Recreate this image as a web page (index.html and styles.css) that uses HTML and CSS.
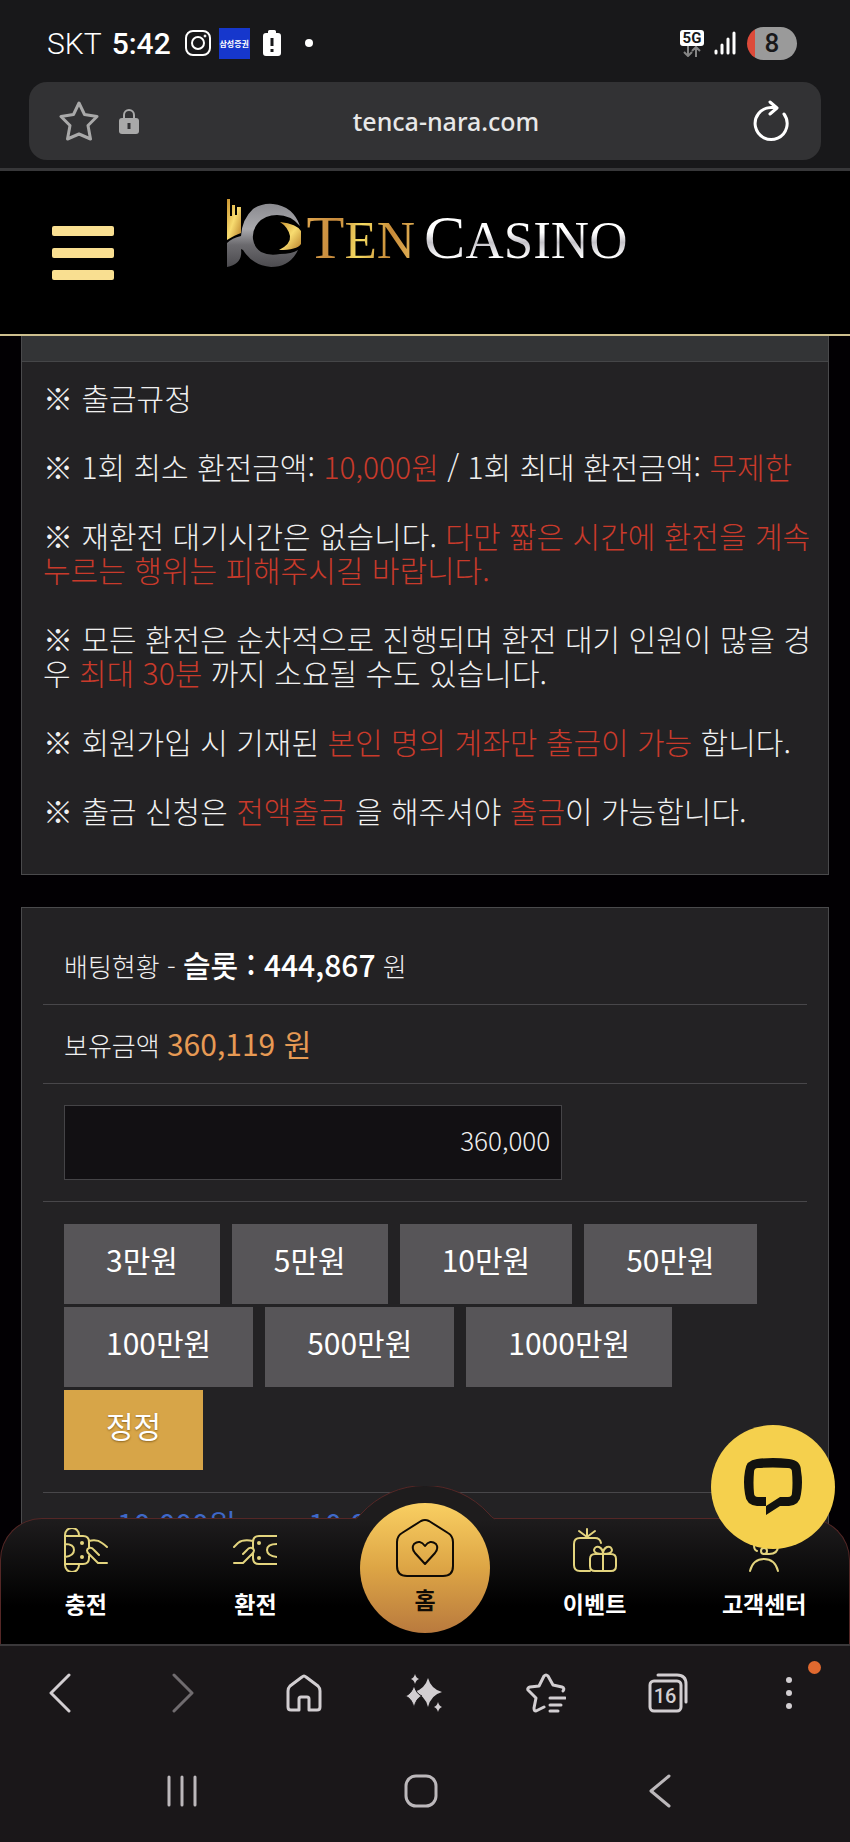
FILE: index.html
```html
<!DOCTYPE html>
<html lang="ko">
<head>
  <meta charset="UTF-8">
  <meta name="viewport" content="width=device-width, initial-scale=1.0">
  <title>TEN CASINO</title>
  <link rel="stylesheet" href="styles.css">
</head>
<body>
  <div class="status-bar">
    <span class="carrier">SKT</span>
    <span class="clock">5:42</span>
    <svg class="insta" width="26" height="26" viewBox="0 0 26 26" fill="none" stroke="#fff" stroke-width="2">
      <rect x="1" y="1" width="24" height="24" rx="7"/>
      <circle cx="13" cy="13" r="6"/>
      <circle cx="20" cy="6" r="1" fill="#fff" stroke-width="1"/>
    </svg>
    <span class="app-badge">삼성증권</span>
    <svg class="low" width="18" height="26" viewBox="0 0 18 26">
      <path d="M5 3V1.500Q5 0 6.500 0h5Q13 0 13 1.500V3h2q3 0 3 3v17q0 3-3 3H3q-3 0-3-3V6q0-3 3-3z" fill="#fff"/>
      <path d="M9 8v8M9 19v3" stroke="#18181a" stroke-width="3"/>
    </svg>
    <span class="more-dot"></span>
    <div class="network">
      <span class="net-type">5G</span>
      <svg width="18" height="11" viewBox="0 0 18 11" fill="none" stroke="#858585" stroke-width="2">
        <path d="M5 0v10M1 6l4 4 4-4M13 11V1M9 5l4-4 4 4"/>
      </svg>
    </div>
    <svg class="signal" width="22" height="24" viewBox="0 0 22 24" stroke="#fff" stroke-width="3" stroke-linecap="round">
      <path d="M2 20v2M8 14v8M14 8v14"/>
      <path d="M20 2v20"/>
    </svg>
    <span class="battery">8</span>
  </div>

  <div class="url-wrap">
    <div class="url-bar">
      <button class="icon-btn" aria-label="Bookmark">
        <svg width="40" height="40" viewBox="0 0 40 40" fill="none" stroke="#a9a9a9" stroke-width="3" stroke-linejoin="round">
          <path d="M20 2l5.500 11.500L38 15.500l-9 9L31.500 38 20 33 8.500 38 11 24.500l-9-9 12.500-2z"/>
        </svg>
      </button>
      <svg class="lock" width="20" height="26" viewBox="0 0 20 26">
        <path d="M5 12V7a5 5 0 0 1 10 0v5" fill="none" stroke="#a9a9a9" stroke-width="2"/>
        <rect x="0" y="10" width="20" height="16" rx="3" fill="#a9a9a9"/>
        <path d="M10 15v6" stroke="#323234" stroke-width="3"/>
      </svg>
      <span class="url">tenca-nara.com</span>
      <button class="icon-btn" aria-label="Reload">
        <svg width="36" height="42" viewBox="0 0 36 42" fill="none" stroke="#fff" stroke-width="3" stroke-linecap="round" stroke-linejoin="round">
          <path d="M31 14a16 16 0 1 1-13-6.500h5M17 2l7 6-7 6"/>
        </svg>
      </button>
    </div>
  </div>

  <div class="site">
    <header class="site-header">
      <button class="menu" aria-label="Menu"><i></i><i></i><i></i></button>
      <a class="logo" href="#">
        <svg width="76" height="68" viewBox="0 0 76 68">
          <defs>
            <linearGradient id="silver" x1="0" y1="0" x2="0" y2="1">
              <stop offset="0" stop-color="#8b8b90"/>
              <stop offset=".4" stop-color="#a9a9ad"/>
              <stop offset=".65" stop-color="#6b6a6e"/>
              <stop offset="1" stop-color="#4c4b4f"/>
            </linearGradient>
            <linearGradient id="gold" x1="0" y1="0" x2="1" y2="1">
              <stop offset="0" stop-color="#c9922e"/>
              <stop offset=".5" stop-color="#f8dc70"/>
              <stop offset="1" stop-color="#b9812b"/>
            </linearGradient>
          </defs>
          <path d="M0 0h3v17h2V6h3v10h2V8h4v26q-6 2-14 7z" fill="url(#gold)"/>
          <path fill-rule="evenodd" d="M0 68V44q5-5 14-7Q15 20 26 10q9-6 20-5 20 2 27 22Q64 16 50 16q-12 0-19 8-6 7-5 16 1 8 8 13 8 4 19 2 12 0 18-4-8 17-27 17-18-1-28-17l-2-1q2 15-14 18z" fill="url(#silver)"/>
          <path d="M53 23q17 2 21 9v13q-4 6-22 6 12-6 11-14-2-9-10-14z" fill="url(#gold)"/>
        </svg>
        <span class="ten">T<small>EN</small></span>
        <span class="casino">C<small>ASINO</small></span>
      </a>
    </header>

    <main>
      <section class="panel rules">
        <div class="panel-head"></div>
        <div class="rules-body">
          <p>※ 출금규정</p>
          <p>※ 1회 최소 환전금액: <em>10,000원</em> / 1회 최대 환전금액: <em>무제한</em></p>
          <p>※ 재환전 대기시간은 없습니다. <em>다만 짧은 시간에 환전을 계속<br>누르는 행위는 피해주시길 바랍니다.</em></p>
          <p>※ 모든 환전은 순차적으로 진행되며 환전 대기 인원이 많을 경<br>우 <em>최대 30분</em> 까지 소요될 수도 있습니다.</p>
          <p>※ 회원가입 시 기재된 <em>본인 명의 계좌만 출금이 가능</em> 합니다.</p>
          <p>※ 출금 신청은 <em>전액출금</em> 을 해주셔야 <em>출금</em>이 가능합니다.</p>
        </div>
      </section>

      <section class="panel withdraw">
        <div class="row">배팅현황 - <b>슬롯 : 444,867</b> 원</div>
        <div class="row">보유금액 <strong>360,119 원</strong></div>
        <div class="row input-row">
          <input type="text" value="360,000" aria-label="환전금액">
        </div>
        <div class="row amounts">
          <button>3만원</button>
          <button>5만원</button>
          <button>10만원</button>
          <button>50만원</button>
          <button>100만원</button>
          <button>500만원</button>
          <button>1000만원</button>
          <button class="reset">정정</button>
        </div>
        <div class="limits"><span>10,000원</span><span>10,000원</span></div>
      </section>
    </main>

    <nav class="tabs">
      <svg class="bump" width="140" height="34" viewBox="0 0 140 34">
        <path d="M0 34V33Q3 32 6 28A86 86 0 0 1 134 28Q137 32 140 33V34z" fill="#1e1c1d"/>
        <path d="M0 33Q3 32 6 28A86 86 0 0 1 134 28Q137 32 140 33" fill="none" stroke="#552726"/>
      </svg>
      <a href="#">
        <svg class="tab-icon" viewBox="0 0 44 44">
          <path d="M1 7v30a7 7 0 0 0 14 0V36M1 7a7 7 0 0 1 14 0V8M1 8h18q6 0 6 6v1M1 36h18q6 0 6-6v-2M1 16q9 0 9 6t-9 7M25 13q8-2 13 2 3 2 5 4M43 35H34L25 26q-4-4 0-6 3-1 5 2l5 5M25 20V13"/>
          <circle class="dot" cx="18" cy="15" r="2"/><circle class="dot" cx="18" cy="29" r="2"/>
        </svg>
        <span>충전</span>
      </a>
      <a href="#">
        <svg class="tab-icon" viewBox="0 0 44 44">
          <path d="M44 8H26q-6 0-6 6v6M20 25v5q0 6 6 6h18M44 16q-10 0-10 6t10 7M20 13q-10-2-15 2L1 19M1 35h9l9-9q4-4 0-6-3-1-5 2l-4 4"/>
          <circle class="dot" cx="26" cy="15" r="2"/><circle class="dot" cx="26" cy="30" r="2"/>
        </svg>
        <span>환전</span>
      </a>
      <a href="#" class="home">
        <svg width="60" height="60" viewBox="0 0 60 60" fill="none" stroke="#100b05" stroke-width="2" stroke-linejoin="round">
          <path d="M26 3q4-2 8 0l19 12q5 3 5 9v24q0 10-10 10H12Q2 58 2 48V24q0-6 5-9z"/>
          <path d="M30 46L20 35q-4-5-1-9 6-5 11 2 5-7 11-2 3 4-1 9z"/>
        </svg>
        <span>홈</span>
      </a>
      <a href="#">
        <svg class="tab-icon" viewBox="0 0 44 44">
          <path d="M17 43H7q-6 0-6-6V16q0-6 6-6h15q5 0 6 5M14 9V1M14 9L6 3M14 9l8-6M22 26h16q5 0 5 5v7q0 5-5 5H22q-5 0-5-5v-7q0-5 5-5zM30 26v17M30 26q-9 0-9-4 1-4 5-3 4 2 4 7 0-5 4-7 4-1 5 3 0 4-9 4"/>
        </svg>
        <span>이벤트</span>
      </a>
      <a href="#">
        <svg class="tab-icon" viewBox="0 0 44 44">
          <path d="M8 43q3-12 14-12t14 12M12 17q0 5 3 6M36 18q0 8-9 8h-4"/>
          <circle cx="22" cy="23" r="3"/>
        </svg>
        <span>고객센터</span>
      </a>
    </nav>

    <button class="chat" aria-label="Chat">
      <svg width="58" height="58" viewBox="0 0 58 58">
        <path fill-rule="evenodd" d="M13 1Q29-1 45 1 57 2 57 13q2 11 0 23-1 11-12 12h-9L22 57V48h-9Q2 47 1 36-1 24 1 13 2 2 13 1zM14 10q-4 0-4 4-1 11 0 21 0 4 4 4h8v9l14-9h8q4 0 4-4 1-10 0-21 0-4-4-4-15-1-30 0z" fill="#12120f"/>
      </svg>
    </button>
  </div>

  <div class="browser-bar">
    <button aria-label="Back"><svg width="40" height="40" viewBox="0 0 40 40"><path d="M28 2L10 20l18 18"/></svg></button>
    <button aria-label="Forward" class="dim"><svg width="40" height="40" viewBox="0 0 40 40"><path d="M12 2l18 18-18 18"/></svg></button>
    <button aria-label="Home"><svg width="40" height="40" viewBox="0 0 40 40"><path d="M4 18q0-3 2-5L18 4q2-2 4 0l12 9q2 2 2 5v16q0 3-3 3h-8V26q0-2-2-2h-6q-2 0-2 2v11H7q-3 0-3-3z"/></svg></button>
    <button aria-label="Assistant"><svg class="solid" width="40" height="40" viewBox="0 0 40 40"><path d="M23 5q3 11 14 14-11 3-14 15-3-12-14-15 11-3 14-14zM10 1q1 4 4 5-3 1-4 5-1-4-4-5 3-1 4-5zM33 29q1 4 4 5-3 1-4 5-1-4-4-5 3-1 4-5z"/><path d="M9 12q2 9 8 11-6 2-8 12-2-10-9-12 7-2 9-11z" stroke="#1a1719" stroke-width="1"/></svg></button>
    <button aria-label="Bookmarks"><svg width="40" height="40" viewBox="0 0 40 40"><path d="M18 34l-8 4q-2 0-2-3l2-10-8-8q-1-2 2-3l9-1 5-10q2-2 4 0l5 9 9 2q3 1 1 4M24 25h15M24 32h11M24 38h8"/></svg></button>
    <button aria-label="Tabs"><svg width="40" height="40" viewBox="0 0 40 40"><rect x="2" y="8" width="31" height="30" rx="4"/><path d="M10 2h19q9 0 9 9v18"/><text x="17" y="30" text-anchor="middle">16</text></svg></button>
    <button aria-label="More" class="more"><svg class="solid" width="40" height="40" viewBox="0 0 40 40"><circle cx="20" cy="7" r="3"/><circle cx="20" cy="20" r="3"/><circle cx="20" cy="33" r="3"/></svg></button>
  </div>

  <div class="system-nav">
    <button aria-label="Recents"><svg width="34" height="34" viewBox="0 0 34 34"><path d="M4 3v28M17 3v28M30 3v28"/></svg></button>
    <button aria-label="Home"><svg width="34" height="34" viewBox="0 0 34 34"><rect x="2" y="2" width="30" height="30" rx="10"/></svg></button>
    <button aria-label="Back"><svg width="34" height="34" viewBox="0 0 34 34"><path d="M26 2L8 17l18 15"/></svg></button>
  </div>
</body>
</html>
```
FILE: styles.css
```css
* {
  box-sizing: border-box;
}

body {
  margin: 0;
  height: 100vh;
  display: flex;
  flex-direction: column;
  background-color: #1a1719;
  color: #f0f0f0;
  font-family: "Noto Sans CJK KR", sans-serif;
  font-weight: 300;
}

button {
  border: 0;
  padding: 0;
  background: none;
  color: inherit;
  font: inherit;
}

a {
  color: inherit;
  text-decoration: none;
}

svg {
  display: block;
}

/* phone status bar */
.status-bar {
  flex: none;
  display: flex;
  align-items: center;
  height: 82px;
  padding: 4px 53px 0 47px;
  background-color: #18181a;
  color: #fff;
  font-family: Roboto, sans-serif;
  font-size: 30px;
}

.clock {
  margin: 0 14px 0 10px;
  font-weight: 500;
}

.app-badge {
  width: 31px;
  height: 31px;
  margin: 0 13px 0 8px;
  background-color: #1637cc;
  font: 700 8px/31px "Noto Sans CJK KR", sans-serif;
  text-align: center;
  white-space: nowrap;
}

.more-dot {
  width: 8px;
  height: 8px;
  margin-left: 24px;
  border-radius: 50%;
  background-color: #fff;
}

.network {
  display: flex;
  flex-direction: column;
  align-items: center;
  margin-left: auto;
}

.net-type {
  width: 24px;
  height: 16px;
  border-radius: 3px;
  background-color: #fff;
  color: #18181a;
  font-size: 15px;
  font-weight: 700;
  line-height: 16px;
  text-align: center;
}

.signal {
  margin: 0 11px 0 10px;
}

.battery {
  width: 50px;
  height: 33px;
  border-radius: 17px;
  background: linear-gradient(90deg, #dc4a3a 8px, #9a9a9a 8px);
  color: #18181a;
  font-size: 26px;
  font-weight: 500;
  line-height: 33px;
  text-align: center;
}

/* address bar */
.url-wrap {
  flex: none;
  padding: 0 29px 8px;
  border-bottom: 3px solid #373739;
  background-color: #18181a;
}

.url-bar {
  display: flex;
  align-items: center;
  height: 78px;
  padding: 0 32px 0 30px;
  border-radius: 18px;
  background-color: #323234;
}

.lock {
  margin-left: 20px;
}

.url {
  flex: 1;
  color: #e8e8e8;
  font-family: "Noto Sans", sans-serif;
  font-size: 25px;
  font-weight: 500;
  text-align: center;
}

/* web page */
.site {
  flex: 1;
  min-height: 0;
  display: flex;
  flex-direction: column;
  position: relative;
  overflow: hidden;
  border-bottom: 2px solid #3a383a;
  background-color: #020003;
}

.site-header {
  flex: none;
  display: grid;
  grid-template-columns: 1fr auto 1fr;
  align-items: center;
  height: 165px;
  padding: 0 52px;
  border-bottom: 2px solid #cdbf8e;
  background-color: #000;
}

.menu {
  display: flex;
  flex-direction: column;
  gap: 12px;
  width: 62px;
}

.menu i {
  height: 10px;
  border-radius: 2px;
  background-color: #f9df91;
}

.logo {
  display: flex;
  align-items: center;
  margin-bottom: 40px;
  padding-left: 4px;
  font-family: "Liberation Serif", serif;
  font-size: 62px;
  font-weight: 400;
  line-height: 68px;
}

.logo small {
  font-size: 53px;
}

.ten,
.casino {
  padding-top: 12px;
  -webkit-background-clip: text;
  background-clip: text;
  color: transparent;
}

.ten {
  margin: 0 9px 0 4px;
  background-image: linear-gradient(100deg, #e0a850, #c78a3c 30%, #f6dd62 50%, #c88a38 75%, #e5b95c);
}

.casino {
  background-image: linear-gradient(#fff 50%, #c4c2c8 62%, #fff 80%);
}

main {
  flex: 1;
  min-height: 0;
  overflow: hidden;
  padding: 0 21px;
}

.panel {
  border: 1px solid #4a4a4c;
  background-color: #232224;
}

.rules {
  border-top: 0;
  margin-bottom: 32px;
}

.panel-head {
  height: 26px;
  border-bottom: 1px solid #454648;
  background-color: #333436;
}

.rules-body {
  padding: 18px 12px 47px 21px;
  font-size: 30px;
  line-height: 34px;
}

.rules-body p {
  margin: 0 0 35px;
  white-space: nowrap;
}

.rules-body p:last-child {
  margin: 0;
}

.rules-body em {
  color: #c93a2b;
  font-style: normal;
}

.withdraw {
  padding: 18px 21px 0;
}

.row {
  padding: 0 21px;
  border-bottom: 1px solid #48474a;
  font-size: 26px;
  line-height: 76px;
}

.row b,
.row strong {
  font-size: 30px;
  font-weight: 500;
}

.row b {
  color: #fff;
}

.row strong {
  color: #e79a54;
  font-weight: 400;
}

.input-row {
  padding: 21px;
}

.input-row input {
  display: block;
  width: 69%;
  height: 75px;
  padding: 0 11px 6px;
  border: 1px solid #454447;
  background-color: #121013;
  color: #f0f0f0;
  font: inherit;
  font-size: 26px;
  text-align: right;
}

.amounts {
  display: flex;
  flex-wrap: wrap;
  gap: 3px 12px;
  padding: 22px 21px;
}

.amounts button {
  height: 80px;
  padding: 0 42px 10px;
  background-color: #575558;
  color: #fff;
  font-size: 30px;
  font-weight: 400;
  line-height: 70px;
}

.amounts .reset {
  background-color: #d7a548;
  text-shadow: 0 1px 2px #8a6420;
}

.limits {
  display: flex;
  gap: 72px;
  padding: 8px 74px;
  color: #3f68c8;
  font-size: 30px;
  font-weight: 400;
  line-height: 44px;
}

/* bottom tabs of the site */
.tabs {
  position: absolute;
  left: 0;
  right: 0;
  bottom: 0;
  display: grid;
  grid-template-columns: repeat(5, 1fr);
  height: 126px;
  border: 1px solid #552726;
  border-bottom: 0;
  border-radius: 42px 42px 0 0;
  background: linear-gradient(#1e1c1d, #000 70%);
}

.bump {
  position: absolute;
  left: 50%;
  top: -33px;
  margin-left: -70px;
}

.tabs a {
  display: flex;
  flex-direction: column;
  align-items: center;
  padding-top: 9px;
  color: #fff;
  font-size: 23px;
  font-weight: 700;
  line-height: 30px;
}

.tab-icon {
  width: 44px;
  height: 44px;
  margin-bottom: 16px;
  fill: none;
  stroke: #e3d47e;
  stroke-width: 2;
  stroke-linecap: round;
  stroke-linejoin: round;
}

.tab-icon .dot {
  fill: #e3d47e;
  stroke: none;
}

.tabs .home {
  position: relative;
  justify-self: center;
  width: 130px;
  height: 130px;
  margin-top: -16px;
  padding-top: 15px;
  border-radius: 50%;
  background: linear-gradient(#f9cf62, #dda545 50%, #b97a3e);
  color: #100b05;
}

.home span {
  margin-top: 6px;
}

.chat {
  position: absolute;
  right: 15px;
  bottom: 95px;
  display: flex;
  align-items: center;
  justify-content: center;
  width: 124px;
  height: 124px;
  border-radius: 50%;
  background-color: #f5d04d;
}

/* browser toolbar and system keys */
.browser-bar,
.system-nav {
  flex: none;
  display: grid;
  align-items: center;
  justify-items: center;
}

.browser-bar {
  grid-template-columns: repeat(7, 1fr);
  height: 94px;
}

.system-nav {
  grid-template-columns: repeat(3, 1fr);
  height: 102px;
  padding: 0 70px 0 62px;
}

.browser-bar svg,
.system-nav svg {
  fill: none;
  stroke: #d2ced1;
  stroke-width: 3;
  stroke-linecap: round;
  stroke-linejoin: round;
}

.system-nav svg {
  stroke: #bcb8bb;
}

.browser-bar .solid {
  fill: #d2ced1;
  stroke: none;
}

.browser-bar .dim svg {
  stroke: #706c6f;
}

.browser-bar text {
  fill: #d2ced1;
  stroke: none;
  font: 500 20px Roboto, sans-serif;
}

.more {
  position: relative;
}

.more::after {
  content: "";
  position: absolute;
  top: -12px;
  right: -12px;
  width: 13px;
  height: 13px;
  border-radius: 50%;
  background-color: #e0692f;
}
```
